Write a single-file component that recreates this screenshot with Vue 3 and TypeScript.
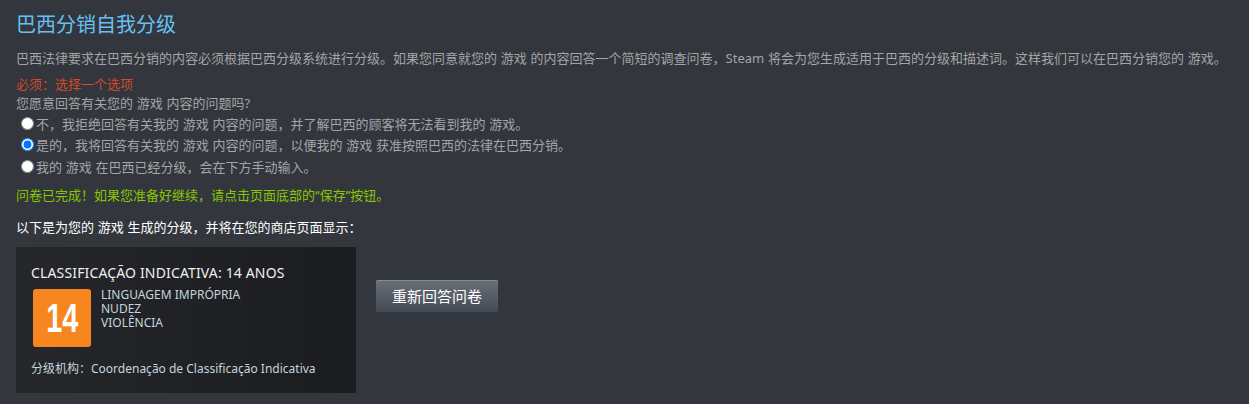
<script setup lang="ts">
const options = [
  { text: '不，我拒绝回答有关我的 游戏 内容的问题，并了解巴西的顾客将无法看到我的 游戏。', checked: false },
  { text: '是的，我将回答有关我的 游戏 内容的问题，以便我的 游戏 获准按照巴西的法律在巴西分销。', checked: true },
  { text: '我的 游戏 在巴西已经分级，会在下方手动输入。', checked: false },
]
const descriptors = ['LINGUAGEM IMPRÓPRIA', 'NUDEZ', 'VIOLÊNCIA']
</script>

<template>
  <main class="page">
    <h1 class="title">巴西分销自我分级</h1>
    <p class="intro">巴西法律要求在巴西分销的内容必须根据巴西分级系统进行分级。如果您同意就您的 游戏 的内容回答一个简短的调查问卷，Steam 将会为您生成适用于巴西的分级和描述词。这样我们可以在巴西分销您的 游戏。</p>
    <div class="required">必须：选择一个选项</div>
    <div class="question">您愿意回答有关您的 游戏 内容的问题吗?</div>
    <div class="options">
      <label v-for="o in options" :key="o.text" class="option">
        <input type="radio" name="answer" :checked="o.checked" />{{ o.text }}
      </label>
    </div>
    <div class="done">问卷已完成！如果您准备好继续，请点击页面底部的“保存”按钮。</div>
    <div class="lead">以下是为您的 游戏 生成的分级，并将在您的商店页面显示：</div>
    <div class="result">
      <section class="card">
        <div class="card-title">CLASSIFICAÇÃO INDICATIVA: 14 ANOS</div>
        <div class="card-body">
          <div class="badge"><span class="age">14</span></div>
          <div class="descriptors">
            <div v-for="d in descriptors" :key="d">{{ d }}</div>
          </div>
        </div>
        <div class="agency">分级机构：Coordenação de Classificação Indicativa</div>
      </section>
      <button class="redo" type="button">重新回答问卷</button>
    </div>
  </main>
</template>

<style>
html, body { margin: 0; background: #33363c; }
</style>

<style scoped>
.page {
  box-sizing: border-box;
  width: 1249px;
  height: 404px;
  overflow: hidden;
  padding: 13px 16px 0;
  background: #33363c;
  color: #a3a5a8;
  font: 13px/18px "Noto Sans", "Noto Sans CJK SC", sans-serif;
  word-spacing: 0.4px;
}
.title {
  margin: 0;
  font-size: 20px;
  font-weight: 400;
  line-height: 24px;
  color: #66c0f4;
}
.intro { margin: 12px 0 0; white-space: nowrap; }
.required { margin-top: 8px; color: #d04b2a; }
.question { margin-top: 1px; }
.options { display: flex; flex-direction: column; margin-top: 1px; }
.option { display: flex; align-items: center; height: 21.5px; padding-left: 4px; }
.option input { width: 13px; height: 13px; margin: 0 2px 1px 1px; flex: none; }
.done { margin-top: 8px; color: #85c700; }
.lead { margin-top: 14px; color: #fff; }
.result { display: flex; align-items: center; gap: 20px; margin-top: 11px; }
.card {
  box-sizing: border-box;
  width: 340px;
  height: 146px;
  padding: 17px 15px 0;
  background: linear-gradient(90deg, #25272b, #1b1c1f);
  color: #c6d4df;
  word-spacing: 0;
}
.card-title { color: #f0f0f0; font-size: 14px; line-height: 18px; letter-spacing: 0.15px; }
.card-body { display: flex; gap: 10px; margin-top: 7px; padding-left: 2px; }
.badge {
  display: flex;
  align-items: center;
  justify-content: center;
  width: 58px;
  height: 58px;
  border-radius: 3px;
  background: #f78621;
}
.age {
  display: block;
  color: #fff;
  font: 700 40px/1 "Liberation Sans", sans-serif;
  transform: scaleX(0.72);
}
.descriptors { margin-top: -1px; font-size: 12px; line-height: 14px; }
.agency { margin-top: 13px; font-size: 12px; line-height: 18px; }
.redo {
  box-sizing: border-box;
  width: 122px;
  height: 32px;
  margin-bottom: 48px;
  padding: 0;
  border: 0;
  border-radius: 2px;
  background: linear-gradient(180deg, #697079, #434a53);
  box-shadow: inset 0 1px 0 #858b93;
  color: #fff;
  font: 15px/32px "Noto Sans", "Noto Sans CJK SC", sans-serif;
}
</style>
